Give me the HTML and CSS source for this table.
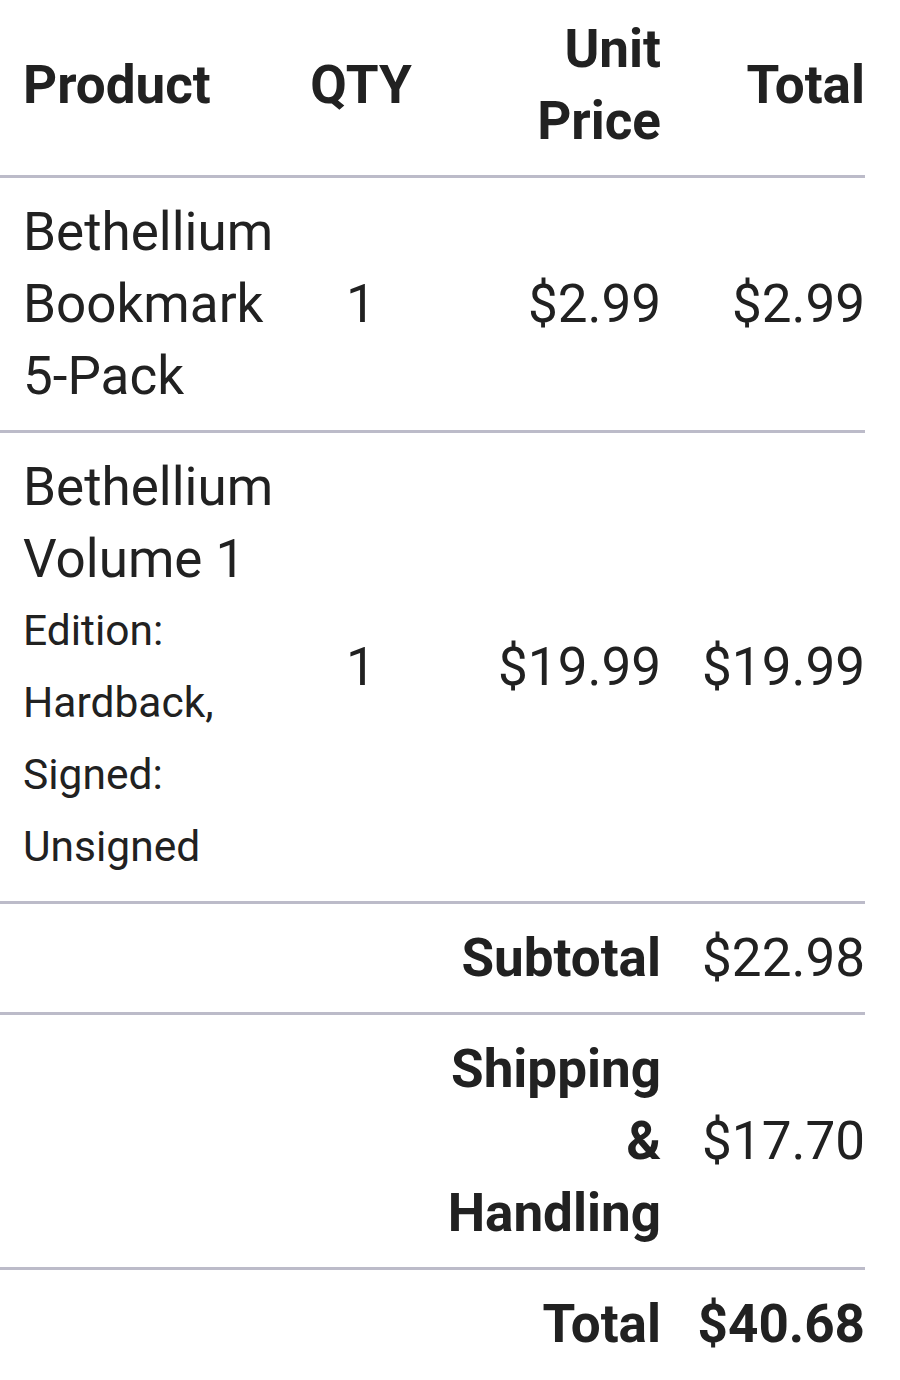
FILE: index.html
```html
<!DOCTYPE html>
<html lang="en">
<head>
<meta charset="UTF-8">
<meta name="viewport" content="width=device-width, initial-scale=1.0">
<title>Cart</title>
<link rel="stylesheet" href="styles.css">
</head>
<body>
	<table class="cart">
		<colgroup>
			<col class="col-product">
			<col class="col-qty">
			<col class="col-price">
			<col class="col-total">
		</colgroup>
		<thead>
			<tr>
				<th class="product">Product</th>
				<th class="qty">QTY</th>
				<th class="price">Unit Price</th>
				<th class="total">Total</th>
			</tr>
		</thead>
		<tbody>
			<tr>
				<td class="product">Bethellium Bookmark 5-Pack</td>
				<td class="qty">1</td>
				<td class="price">$2.99</td>
				<td class="total">$2.99</td>
			</tr>
			<tr>
				<td class="product">
					Bethellium Volume 1
					<div class="options">Edition: Hardback, Signed: Unsigned</div>
				</td>
				<td class="qty">1</td>
				<td class="price">$19.99</td>
				<td class="total">$19.99</td>
			</tr>
		</tbody>
		<tfoot>
			<tr>
				<td colspan="2"></td>
				<th class="price">Subtotal</th>
				<td class="total">$22.98</td>
			</tr>
			<tr>
				<td colspan="2"></td>
				<th class="price">Shipping &amp; Handling</th>
				<td class="total">$17.70</td>
			</tr>
			<tr class="grand">
				<td colspan="2"></td>
				<th class="price">Total</th>
				<td class="total">$40.68</td>
			</tr>
		</tfoot>
	</table>
</body>
</html>
```

FILE: styles.css
```css
body {
	margin: 0;
	background: #fff;
	color: #212121;
	font-family: Roboto, "Liberation Sans", Arial, sans-serif;
}
.cart {
	width: 865px;
	table-layout: fixed;
	border-collapse: collapse;
	font-size: 53px;
	line-height: 72px;
}
/* columns: QTY centred on x=360, price ends at 659, total at 863 */
.col-product { width: 281px; }
.col-qty { width: 160px; }
.col-price { width: 240px; }
.col-total { width: 184px; }

th, td {
	padding: 18px 0;
	border-bottom: 3px solid #bcbbc9;
	vertical-align: middle;
	font-weight: normal;
}
th {
	font-weight: bold;
}
thead th {
	padding-top: 13px;
}
.product {
	text-align: left;
	padding-left: 23px;
}
.qty {
	text-align: center;
}
.price {
	text-align: right;
	padding-right: 20px;
}
.total {
	text-align: right;
}
.options {
	font-size: 42.5px;
}
.grand td, .grand th {
	border-bottom: none;
	font-weight: bold;
}
```
